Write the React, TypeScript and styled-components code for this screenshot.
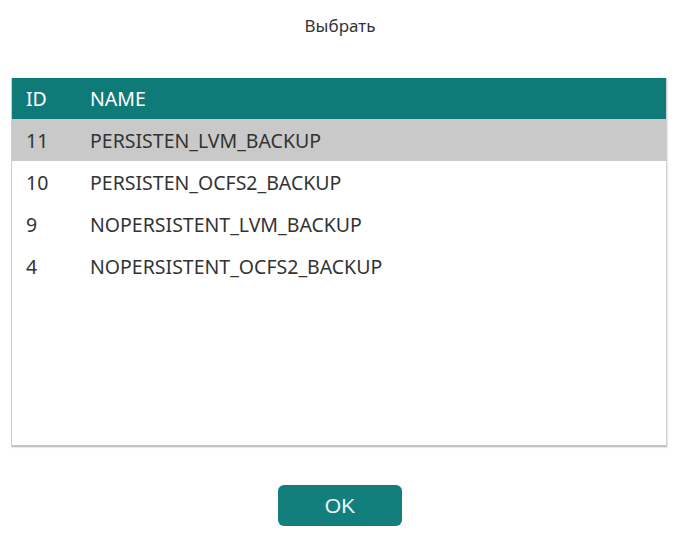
import React from "react";
import styled, { createGlobalStyle } from "styled-components";

const GlobalStyle = createGlobalStyle`
  html, body { margin: 0; padding: 0; background: #ffffff; }
  body { font-family: "Noto Sans", "Open Sans", sans-serif; }
`;

const Page = styled.div`
  width: 680px;
  height: 541px;
  display: flex;
  flex-direction: column;
  align-items: center;
  background: #fff;
`;

const Title = styled.div`
  margin-top: 15px;
  height: 22px;
  line-height: 22px;
  font-size: 17px;
  color: #333;
`;

const TableBox = styled.div`
  margin-top: 41px;
  margin-right: 2px;
  width: 654px;
  height: 367px;
  border: 1px solid #cfcfcf;
  border-top: none;
  border-bottom: 2px solid #c4c4c4;
  box-shadow: 1px 1px 1px rgba(0, 0, 0, 0.08);
  display: flex;
  flex-direction: column;
`;

const Row = styled.div<{ $variant: "head" | "selected" | "normal" }>`
  display: grid;
  grid-template-columns: 64px 1fr;
  align-items: center;
  height: ${(p) => (p.$variant === "head" ? 41 : 42)}px;
  padding-left: 14px;
  font-size: 19.5px;
  color: ${(p) => (p.$variant === "head" ? "#ffffff" : "#333333")};
  background: ${(p) =>
    p.$variant === "head" ? "#0f7b79" : p.$variant === "selected" ? "#c9c9c9" : "#ffffff"};
`;

const Cell = styled.span`
  white-space: nowrap;
`;

const OkButton = styled.button`
  margin-top: 38px;
  width: 124px;
  height: 41px;
  border: none;
  border-radius: 6px;
  background: #127f7d;
  color: #e8f4f3;
  font-family: "Liberation Sans", Arial, sans-serif;
  font-size: 21px;
  cursor: pointer;
`;

const rows = [
  { id: "11", name: "PERSISTEN_LVM_BACKUP" },
  { id: "10", name: "PERSISTEN_OCFS2_BACKUP" },
  { id: "9", name: "NOPERSISTENT_LVM_BACKUP" },
  { id: "4", name: "NOPERSISTENT_OCFS2_BACKUP" },
];

export default function App() {
  return (
    <>
      <GlobalStyle />
      <Page>
        <Title>Выбрать</Title>
        <TableBox>
          <Row $variant="head">
            <Cell>ID</Cell>
            <Cell>NAME</Cell>
          </Row>
          {rows.map((r, i) => (
            <Row key={r.id} $variant={i === 0 ? "selected" : "normal"}>
              <Cell>{r.id}</Cell>
              <Cell>{r.name}</Cell>
            </Row>
          ))}
        </TableBox>
        <OkButton>OK</OkButton>
      </Page>
    </>
  );
}
